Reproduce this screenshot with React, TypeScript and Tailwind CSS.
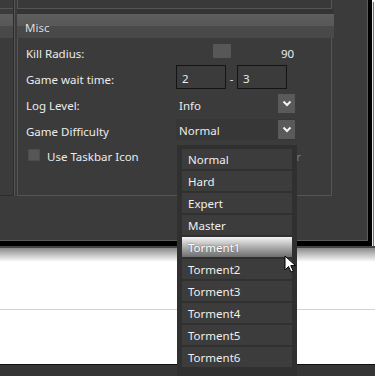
import React from "react";

const difficulties = [
  "Normal",
  "Hard",
  "Expert",
  "Master",
  "Torment1",
  "Torment2",
  "Torment3",
  "Torment4",
  "Torment5",
  "Torment6",
];

const ArrowButton = () => (
  <div className="flex h-[19px] w-[17px] items-center justify-center bg-[#5a5a5a]">
    <svg width="10" height="7" viewBox="0 0 10 7">
      <path d="M1.5 1.5 L5 5 L8.5 1.5" stroke="#f2f2f2" strokeWidth="2" fill="none" />
    </svg>
  </div>
);

const Row = ({ label, children }: { label: string; children?: React.ReactNode }) => (
  <div className="flex h-[26px] items-center">
    <div className="w-[150px] shrink-0 pt-[5px]">{label}</div>
    {children}
  </div>
);

const DifficultyPopup = () => (
  <div className="absolute left-[177px] top-[145px] flex h-[240px] w-[120px] flex-col gap-[2px] bg-[#303030] px-[5px] pt-[4px]">
    {difficulties.map((d) =>
      d === "Torment1" ? (
        <div
          key={d}
          className="flex h-[20px] items-center bg-[linear-gradient(#f4f4f4,#a8a8a8_55%,#6e6e6e)] pl-[6px] pt-[2px] text-white [text-shadow:0_0_2px_#555]"
        >
          {d}
        </div>
      ) : (
        <div key={d} className="flex h-[20px] items-center bg-[#3c3c3c] pl-[6px] pt-[2px] text-[#f0f0f0]">
          {d}
        </div>
      )
    )}
  </div>
);

const Cursor = () => (
  <svg className="absolute left-[284px] top-[255px]" width="14" height="19" viewBox="0 0 14 19">
    <path
      d="M1 1 L1 15 L4.5 11.5 L7 17 L9.3 16 L6.8 10.6 L11.5 10.6 Z"
      fill="#fff"
      stroke="#000"
      strokeWidth="1"
      strokeLinejoin="round"
    />
  </svg>
);

export default function App() {
  return (
    <div className="relative h-[376px] w-[375px] overflow-hidden bg-white font-['Noto_Sans',sans-serif] text-[11.5px] text-[#ececec]">
      {/* window */}
      <div className="h-[246px] w-[372px] border-b-[5px] border-r-[4px] border-black bg-[#3b3b3b] shadow-[1px_1px_0_#e6e6e6,2px_2px_0_#777]">
        <div className="flex h-[241px] border-b border-r border-[#5a5a5a]">
          {/* left panel */}
          <div className="flex h-[196px] w-[14px] shrink-0 flex-col border-r border-b border-[#2c2c2c]">
            <div className="h-[9px] border-b border-[#555]" />
            <div className="mt-[5px] h-[24px] bg-[linear-gradient(#5e5e5e_0%,#585858_50%,#4a4a4a_50%,#484848_100%)]" />
          </div>
          <div className="h-[196px] w-[3px] border-l border-[#555]" />
          {/* main column */}
          <div className="flex w-[317px] flex-col">
            <div className="mr-[2px] h-[9px] border-b border-l border-r border-[#555] bg-[#393939]" />
            <div className="h-[5px] bg-[#343434]" />
            <div className="flex h-[24px] items-center bg-[linear-gradient(#5e5e5e_0%,#585858_50%,#4a4a4a_50%,#484848_100%)] pl-[8px] pt-[4px] text-[#dedede]">
              Misc
            </div>
            <div className="mr-[2px] flex h-[158px] flex-col border border-t-0 border-[#555] pl-[8px]">
              <Row label="Kill Radius:">
                <div className="flex w-[105px] items-center">
                  <div className="ml-[37px] h-[14px] w-[18px] rounded-[1px] bg-[#575757]" />
                </div>
                <span className="pt-[5px]">90</span>
              </Row>
              <Row label="Game wait time:">
                <div className="flex h-[24px] w-[50px] items-center border border-[#141414] pl-[5px] pt-[3px]">2</div>
                <span className="w-[11px] pt-[3px] text-center">-</span>
                <div className="flex h-[24px] w-[50px] items-center border border-[#141414] pl-[5px] pt-[3px]">3</div>
              </Row>
              <Row label="Log Level:">
                <div className="flex w-[119px] items-center justify-between pl-[3px]">
                  <span className="pt-[5px]">Info</span>
                  <ArrowButton />
                </div>
              </Row>
              <Row label="Game Difficulty">
                <div className="flex h-[21px] w-[119px] items-center justify-between bg-[#373737] pl-[3px]">
                  <span className="pt-[4px]">Normal</span>
                  <ArrowButton />
                </div>
              </Row>
              <div className="flex h-[26px] items-center pr-[30px]">
                <div className="ml-[2px] h-[12px] w-[12px] border border-[#4c4c4c] bg-[#565656]" />
                <span className="ml-[7px] pt-[4px]">Use Taskbar Icon</span>
                <span className="ml-auto pt-[4px] text-[#7a7a7a]">Color</span>
              </div>
            </div>
          </div>
        </div>
      </div>
      {/* page below the window */}
      <div className="h-[2px] bg-[#444]" />
      <div className="h-[14px] bg-[linear-gradient(#8a8a8a,#ffffff)]" />
      <div className="h-[47px]" />
      <div className="h-[1px] bg-[#d2d2d2]" />
      <div className="h-[54px]" />
      <div className="h-[12px] border-t border-[#111] bg-[#353535]" />
      <DifficultyPopup />
      <Cursor />
    </div>
  );
}
